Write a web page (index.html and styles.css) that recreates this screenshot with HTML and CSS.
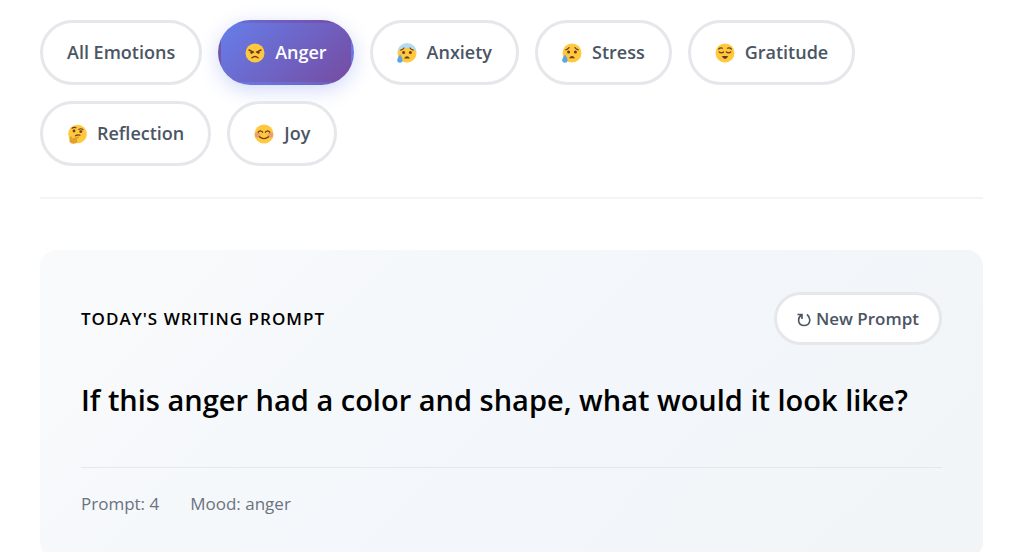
FILE: index.html
```html
<!DOCTYPE html>
<html lang="en">
<head>
  <meta charset="UTF-8">
  <meta name="viewport" content="width=device-width, initial-scale=1.0">
  <title>Writing Prompts</title>
  <link rel="stylesheet" href="styles.css">
</head>
<body>
  <main class="container">

    <!-- Emotion filter -->
    <div class="emotion-filter">
      <button class="emotion-btn">All Emotions</button>
      <button class="emotion-btn active">
        <svg class="emoji" viewBox="0 0 20 20" aria-hidden="true">
          <circle cx="10" cy="10" r="9.5" fill="#ffc83d"/>
          <path d="M4 7l4.5 2.2M16 7l-4.5 2.2M7 14.8q3-2.6 6 0" fill="none" stroke="#6b3a1e" stroke-width="1.4" stroke-linecap="round"/>
          <circle cx="6.6" cy="9.6" r="1.3" fill="#6b3a1e"/>
          <circle cx="13.4" cy="9.6" r="1.3" fill="#6b3a1e"/>
        </svg>
        Anger
      </button>
      <button class="emotion-btn">
        <svg class="emoji" viewBox="0 0 20 20" aria-hidden="true">
          <circle cx="10" cy="10" r="9.5" fill="#ffc83d"/>
          <path d="M.5 9.5a9.5 9.5 0 0 1 19 0q-2-3.5-4-3.8-5.5-1.6-11 0-2 .3-4 3.8z" fill="#b4dcf0"/>
          <path d="M3.8 7.2q2-.4 3.2-2.2M16.2 7.2q-2-.4-3.2-2.2" fill="none" stroke="#6b3a1e" stroke-width="1.2" stroke-linecap="round"/>
          <circle cx="6.6" cy="9.6" r="1.5" fill="#6b3a1e"/>
          <circle cx="13.4" cy="9.6" r="1.5" fill="#6b3a1e"/>
          <path d="M7 15.5q3-4.6 6 0z" fill="#6b3a1e"/>
          <path d="M3.2 11.5q-3 3.8-3 5.6a2.7 2.7 0 0 0 5.4 0q0-1.8-2.4-5.6z" fill="#5aa5e6"/>
        </svg>
        Anxiety
      </button>
      <button class="emotion-btn">
        <svg class="emoji" viewBox="0 0 20 20" aria-hidden="true">
          <circle cx="10" cy="10" r="9.5" fill="#ffc83d"/>
          <path d="M3.8 6.8q2-.4 3.2-2.2M16.2 6.8q-2-.4-3.2-2.2" fill="none" stroke="#6b3a1e" stroke-width="1.2" stroke-linecap="round"/>
          <circle cx="6.6" cy="9" r="1.5" fill="#6b3a1e"/>
          <circle cx="13.4" cy="9" r="1.5" fill="#6b3a1e"/>
          <path d="M7 15.2q3-4.6 6 0z" fill="#6b3a1e"/>
          <path d="M3.2 11.5q-3 3.8-3 5.6a2.7 2.7 0 0 0 5.4 0q0-1.8-2.4-5.6z" fill="#5aa5e6"/>
        </svg>
        Stress
      </button>
      <button class="emotion-btn">
        <svg class="emoji" viewBox="0 0 20 20" aria-hidden="true">
          <circle cx="10" cy="10" r="9.5" fill="#ffc83d"/>
          <path d="M3.5 6.2q1.8-1.8 4-1M16.5 6.2q-1.8-1.8-4-1M4.2 9q2.2 1.8 4.4 0M11.4 9q2.2 1.8 4.4 0" fill="none" stroke="#6b3a1e" stroke-width="1.2" stroke-linecap="round"/>
          <path d="M7 13h6q-.8 3-3 3t-3-3z" fill="#6b3a1e"/>
        </svg>
        Gratitude
      </button>
      <button class="emotion-btn">
        <svg class="emoji" viewBox="0 0 20 20" aria-hidden="true">
          <circle cx="10.5" cy="10" r="9.3" fill="#ffc83d"/>
          <path d="M5 4.2q2-1.6 4-.4M11.8 5.4q2.2-1.4 4.2.2M8.5 11.8q2-1.4 4.5-.6" fill="none" stroke="#6b3a1e" stroke-width="1.2" stroke-linecap="round"/>
          <circle cx="7" cy="7" r="1.4" fill="#6b3a1e"/>
          <circle cx="13.8" cy="7.6" r="1.4" fill="#6b3a1e"/>
          <path d="M3 12.5q1.2-1 1.8.8l.6 1.2 5.8-2q1.4-.2.8 1.2l-2 1q1.4 4.6-3 5-4.2.2-4.6-3z" fill="#e3a12b"/>
        </svg>
        Reflection
      </button>
      <button class="emotion-btn">
        <svg class="emoji" viewBox="0 0 20 20" aria-hidden="true">
          <circle cx="10" cy="10" r="9.5" fill="#ffc83d"/>
          <circle cx="3.6" cy="11" r="2.8" fill="#e8a070"/>
          <circle cx="16.4" cy="11" r="2.8" fill="#e8a070"/>
          <path d="M4.2 8.2q2-2.8 4.4 0M11.4 8.2q2.4-2.8 4.4 0M5.5 12.8q4.5 3.6 9 0" fill="none" stroke="#6b3a1e" stroke-width="1.3" stroke-linecap="round"/>
        </svg>
        Joy
      </button>
    </div>

    <!-- Prompt card -->
    <section class="prompt-card">
      <div class="prompt-header">
        <h2 class="prompt-label">Today's Writing Prompt</h2>
        <button class="new-prompt-btn">
          <svg class="refresh-icon" viewBox="0 0 14 16" aria-hidden="true">
            <path d="M.5 3.500h4.500v4.500M4.500 4C0 7 .8 14.500 7 14.500c6.500 0 7.500-7.500 3-11" fill="none" stroke="currentColor" stroke-width="1.600"/>
          </svg>
          New Prompt
        </button>
      </div>
      <p class="prompt-text">If this anger had a color and shape, what would it look like?</p>
      <div class="prompt-meta">
        <span>Prompt: 4</span>
        <span>Mood: anger</span>
      </div>
    </section>

  </main>
</body>
</html>
```

FILE: styles.css
```css
* {
  box-sizing: border-box;
}

body {
  margin: 0;
  background: #fff;
  color: #000;
  font-family: "Segoe UI", "Open Sans", "Noto Sans", sans-serif;
  overflow: hidden;
}

.container {
  padding: 20px 41px 20px 40px;
}

.emotion-filter {
  display: flex;
  flex-wrap: wrap;
  gap: 16px;
  padding-bottom: 31px;
  margin-bottom: 51px;
  border-bottom: 2px solid #f3f4f6;
}

.emotion-btn {
  display: flex;
  align-items: center;
  gap: 10px;
  padding: 18px 24px;
  border: 3px solid #e5e7eb;
  border-radius: 33px;
  background: #fff;
  color: #4b5563;
  font-family: inherit;
  font-size: 18px;
  font-weight: 600;
  line-height: 23px;
  cursor: pointer;
}

.emotion-btn.active {
  border-color: transparent;
  background: linear-gradient(135deg, #667eea 0%, #764ba2 100%);
  color: #fff;
  box-shadow: 0 5px 19px rgba(102, 126, 234, 0.3);
}

.emoji {
  width: 20px;
  height: 20px;
}

.prompt-card {
  padding: 42px 41px;
  border-radius: 16px;
  background: linear-gradient(135deg, #f9fafb 0%, #f3f7fb 50%, #f1f5f8 100%);
}

.prompt-header {
  display: flex;
  justify-content: space-between;
  align-items: center;
  margin-bottom: 32px;
}

.prompt-label {
  margin: 0;
  font-size: 17px;
  font-weight: 600;
  line-height: 24px;
  letter-spacing: 1px;
  text-transform: uppercase;
}

.new-prompt-btn {
  display: flex;
  align-items: center;
  gap: 5px;
  padding: 12px 20px;
  border: 3px solid #e5e7eb;
  border-radius: 27px;
  background: #fff;
  color: #4b5563;
  font-family: inherit;
  font-size: 17px;
  font-weight: 600;
  line-height: 23px;
  cursor: pointer;
}

.refresh-icon {
  width: 14px;
  height: 16px;
}

.prompt-text {
  margin: 0 0 44px;
  font-size: 29px;
  font-weight: 600;
  line-height: 46px;
}

.prompt-meta {
  display: flex;
  gap: 31px;
  padding-top: 24px;
  border-top: 1px solid #e5e7eb;
  color: #6b7280;
  font-size: 17px;
  line-height: 24px;
}
```
